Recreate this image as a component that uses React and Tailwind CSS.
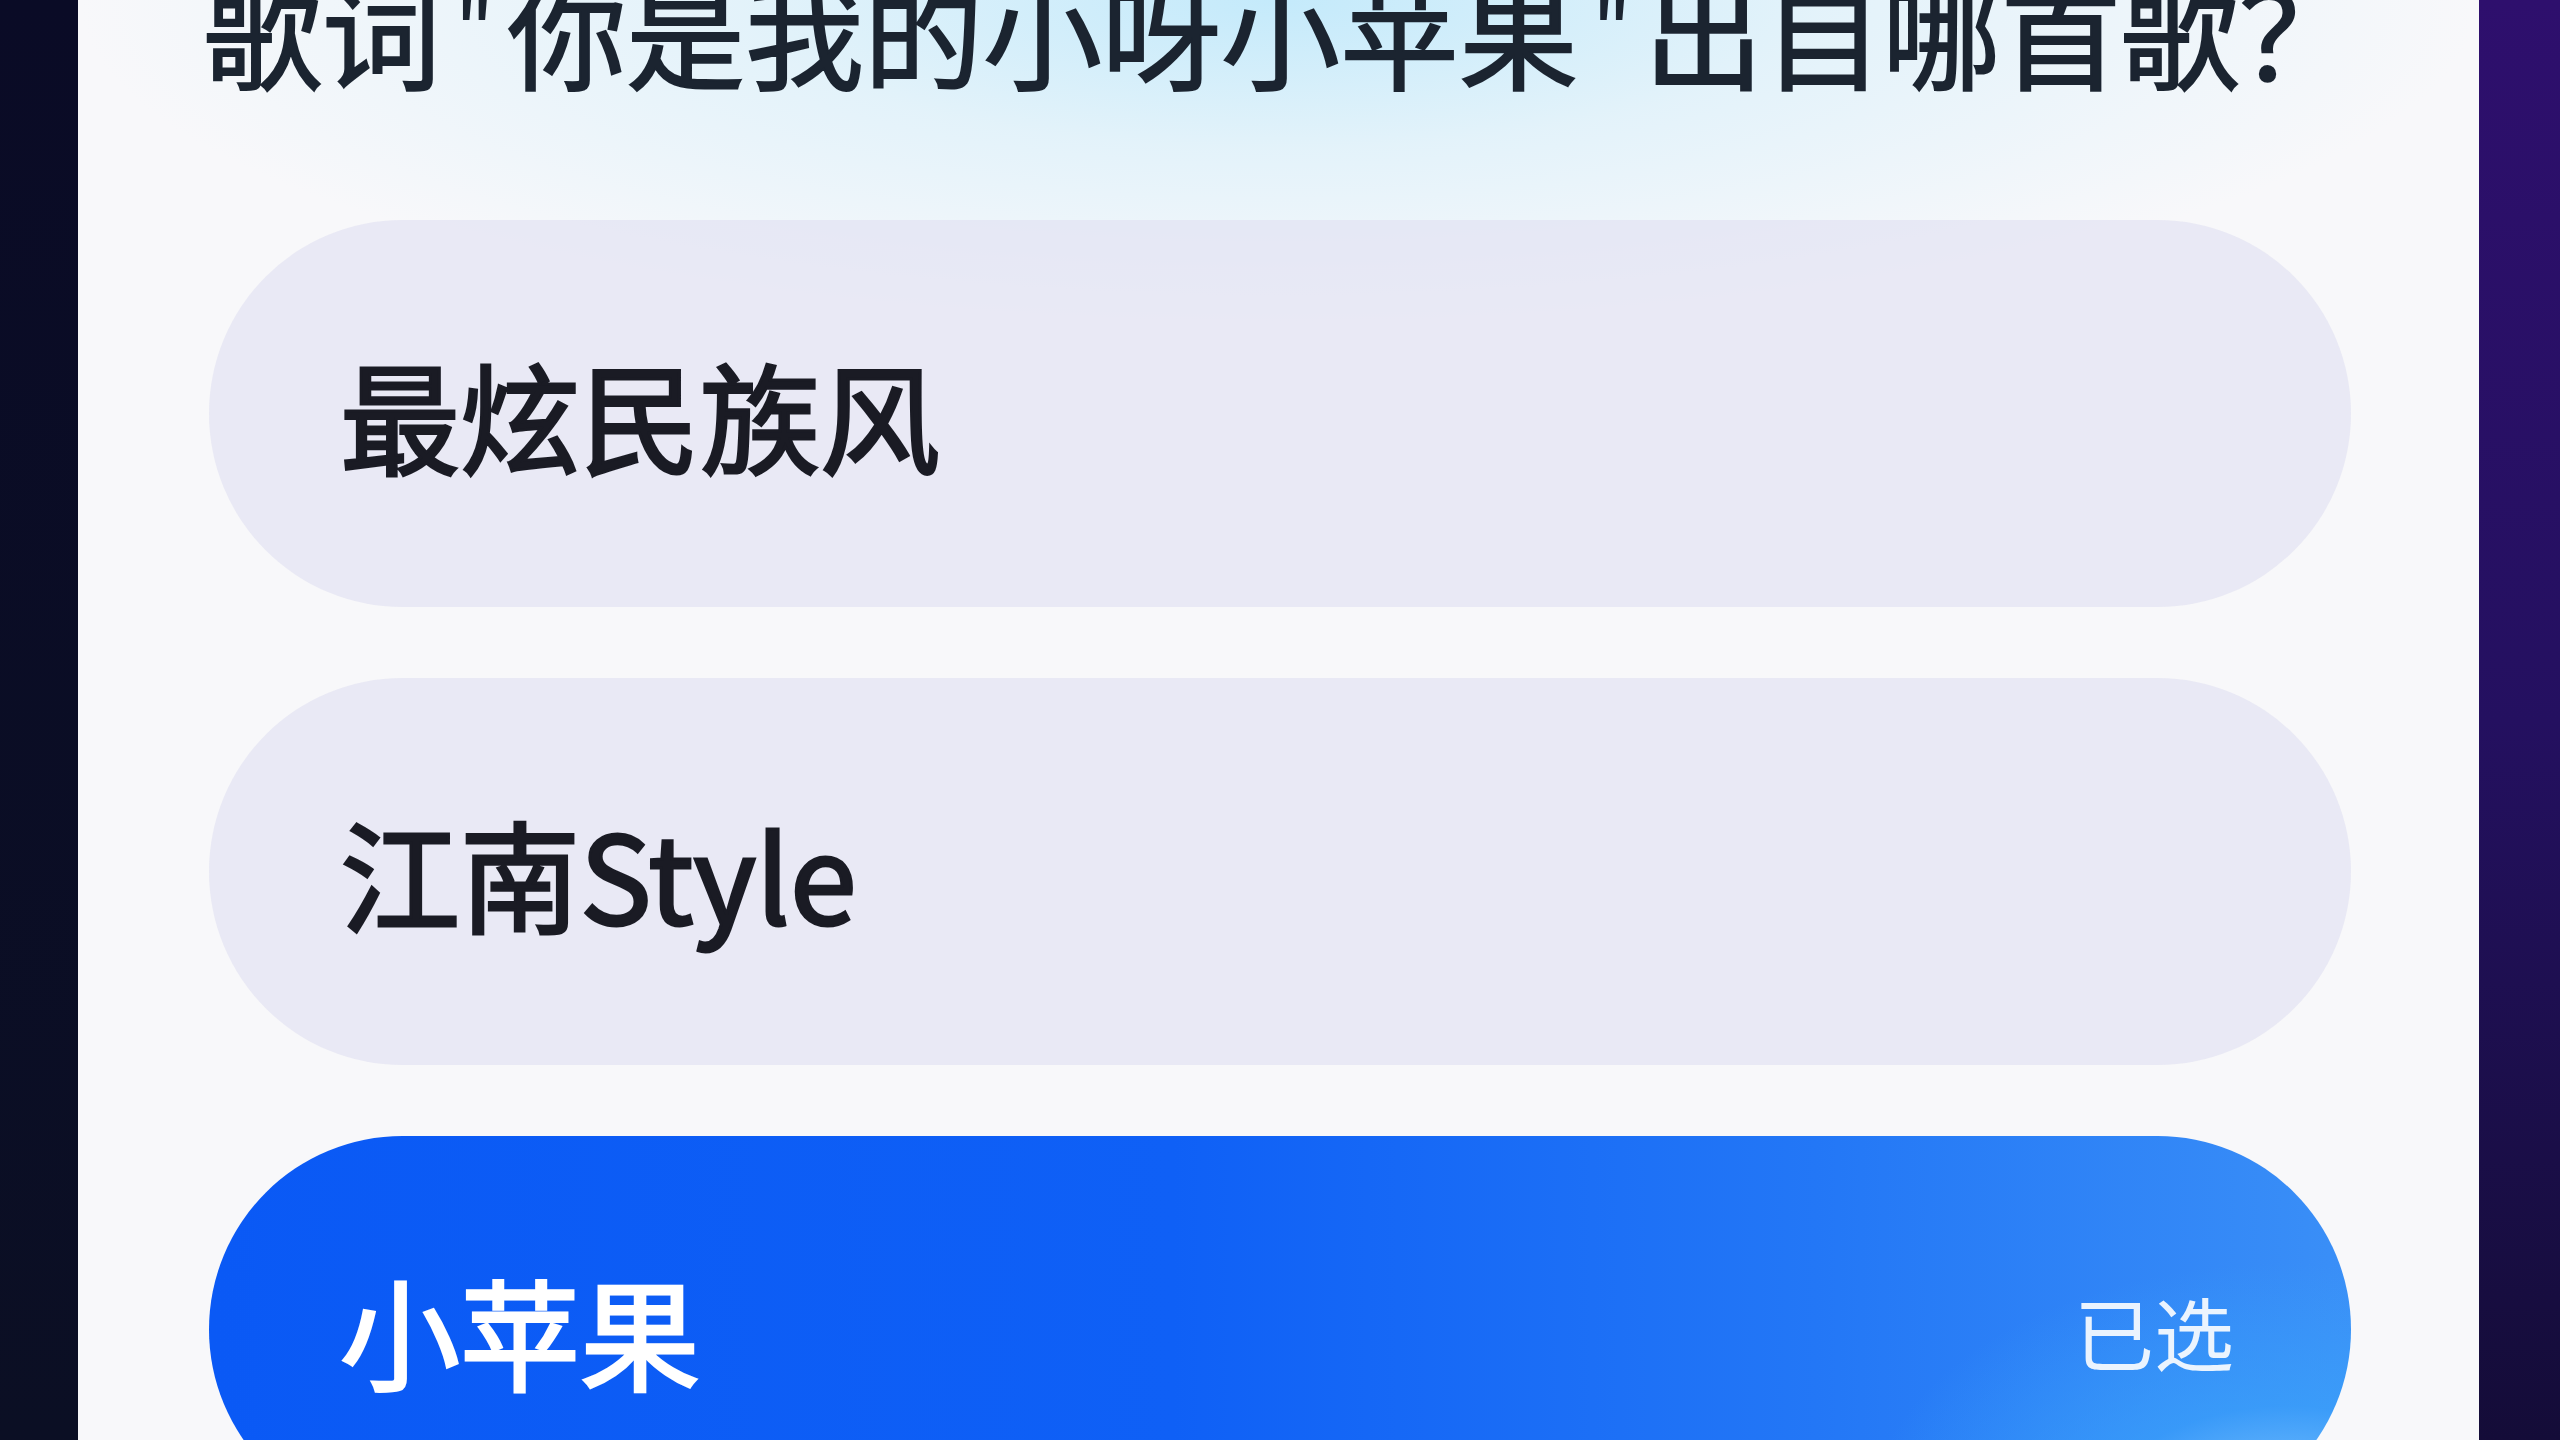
export default function App() {
  const font = { fontFamily: '"Noto Sans CJK SC", "Noto Sans", sans-serif' };
  return (
    <div
      className="w-[2560px] h-[1440px] overflow-hidden flex bg-[#0a0c24]"
      style={font}
    >
      <div className="w-[78px] shrink-0 bg-gradient-to-b from-[#0a0b26] to-[#0b0f24]" />
      <div className="flex-1 min-w-0 bg-[#f8f8fa] bg-[radial-gradient(ellipse_1200px_330px_at_50%_0%,#c4eafb_0%,rgba(210,238,250,0.55)_45%,rgba(248,248,250,0)_100%)] pl-[131px] pr-[128px]">
        <h1 className="-mt-[30px] -ml-[6px] whitespace-nowrap text-[119px] leading-none font-normal text-[#1b2430] [-webkit-text-stroke:2px_#1b2430]">
          歌词<span className="mx-[14px] font-['Roboto',sans-serif] [-webkit-text-stroke:0px]">"</span>你是我的小呀小苹果<span className="mx-[14px] font-['Roboto',sans-serif] [-webkit-text-stroke:0px]">"</span>出自哪首歌？
        </h1>
        <div className="mt-[120px] flex flex-col gap-[71px]">
          <div className="h-[387px] shrink-0 rounded-full bg-[rgba(225,226,242,0.68)] flex items-center pl-[131px] pr-[117px]">
            <span className="text-[120px] leading-none font-normal text-[#1a1b24] [-webkit-text-stroke:3px_#1a1b24]">最炫民族风</span>
          </div>
          <div className="h-[387px] shrink-0 rounded-full bg-[rgba(225,226,242,0.68)] flex items-center pl-[131px] pr-[117px]">
            <span className="text-[120px] leading-none font-normal text-[#1a1b24] [-webkit-text-stroke:3px_#1a1b24]">江南Style</span>
          </div>
          <div className="h-[387px] shrink-0 rounded-full bg-[radial-gradient(ellipse_420px_260px_at_97%_100%,rgba(140,205,255,0.95)_0%,rgba(60,165,250,0.6)_45%,rgba(40,140,248,0)_100%),linear-gradient(90deg,#0a59f5_0%,#0f60f6_45%,#2377f6_75%,#3a8ff7_100%)] flex items-center justify-between pl-[131px] pr-[117px]">
            <span className="text-[120px] leading-none font-normal text-white [-webkit-text-stroke:3px_#ffffff]">小苹果</span>
            <span className="text-[80px] leading-none font-normal text-white/90">已选</span>
          </div>
        </div>
      </div>
      <div className="w-[81px] shrink-0 bg-gradient-to-b from-[#2e0f6d] via-[#241060] to-[#140c38]" />
    </div>
  );
}
